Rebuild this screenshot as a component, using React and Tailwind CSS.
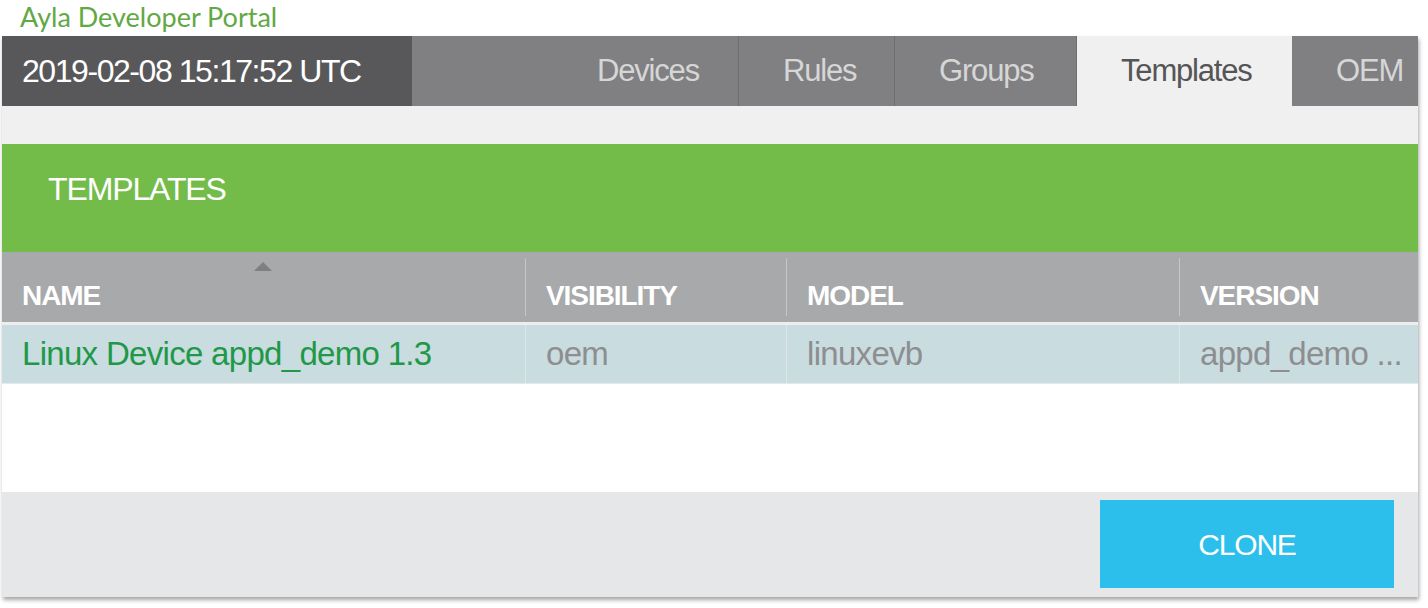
const tabs = [
  { label: 'Rules', w: 'w-[156px]' },
  { label: 'Groups', w: 'w-[182px]' },
  { label: 'Templates', w: 'w-[216px]', active: true },
  { label: 'OEM', w: 'w-[126px]' },
];

const columns = [
  { label: 'NAME', w: 'w-[523px]', sort: true },
  { label: 'VISIBILITY', w: 'w-[261px]' },
  { label: 'MODEL', w: 'w-[393px]' },
  { label: 'VERSION', w: 'flex-1' },
];

export default function App() {
  return (
    <div className="w-[1428px] h-[608px] bg-white overflow-hidden font-['Liberation_Sans',Arial,sans-serif]">
      <div className="h-[36px] pl-[20px] text-[27px] leading-[34px] text-[#62a844] font-['Lato','Open_Sans',sans-serif]">
        Ayla Developer Portal
      </div>

      <div className="ml-[2px] w-[1416px] shadow-[1px_3px_4px_rgba(0,0,0,0.35)]">
        {/* top nav */}
        <div className="flex h-[70px] overflow-hidden">
          <div className="w-[410px] bg-[#58585a] text-white text-[32px] tracking-[-0.045em] flex items-center pl-[20px]">
            2019-02-08 15:17:52 UTC
          </div>
          <div className="flex-1 bg-[#808082] text-[#d6d6d6] text-[31px] tracking-[-0.038em] flex items-center justify-end pr-[39px]">
            Devices
          </div>
          {tabs.map(t => (
            <div key={t.label}
              className={`${t.w} shrink-0 flex items-center pl-[44px] text-[31px] tracking-[-0.038em] border-l border-[#6e6e70] ${t.active ? 'bg-[#f0f0f0] text-[#555557]' : 'bg-[#808082] text-[#d6d6d6]'} ${t.label === 'OEM' ? 'border-l-0' : ''}`}>
              {t.label}
            </div>
          ))}
        </div>

        <div className="h-[38px] bg-[#f0f0f0]" />

        <div className="h-[108px] bg-[#74bc4a] pl-[46px] pt-[29px]">
          <h1 className="text-white text-[32px] tracking-[-0.035em] leading-[32px]">TEMPLATES</h1>
        </div>

        {/* table header */}
        <div className="flex h-[70px] bg-[#a8a9ab]">
          {columns.map((c, i) => (
            <div key={c.label}
              className={`${c.w} relative flex items-end pb-[14px] pl-[20px] text-white font-bold text-[28px] tracking-[-0.038em] ${i > 0 ? 'border-l border-[#c6c7c9]' : ''} my-[6px]`}>
              {c.sort && (
                <span className="absolute left-[252px] top-[4px] w-0 h-0 border-l-[9px] border-r-[9px] border-b-[9px] border-l-transparent border-r-transparent border-b-[#7f7f81]" />
              )}
              <span className="leading-[28px] translate-y-[8px]">{c.label}</span>
            </div>
          ))}
        </div>

        <div className="h-[3px] bg-[#eeeeee]" />

        {/* row */}
        <div className="flex h-[59px] bg-[#c9dce0] text-[33px] tracking-[-0.021em] border-b border-[#e4eaec]">
          <div className="w-[523px] flex items-center pl-[20px] text-[#1f9848]">Linux Device appd_demo 1.3</div>
          <div className="w-[261px] flex items-center pl-[20px] text-[#8e8e90] border-l border-[#dde6e8]">oem</div>
          <div className="w-[393px] flex items-center pl-[20px] text-[#8e8e90] border-l border-[#dde6e8]">linuxevb</div>
          <div className="flex-1 flex items-center pl-[20px] text-[#8e8e90] border-l border-[#dde6e8] whitespace-nowrap overflow-hidden">appd_demo ...</div>
        </div>

        <div className="h-[108px] bg-white" />

        {/* footer */}
        <div className="h-[105px] bg-[#e6e7e8] flex justify-end pt-[8px] pr-[24px]">
          <button className="w-[294px] h-[88px] bg-[#2dbfec] text-white text-[30px] tracking-[-0.04em] flex items-center justify-center">
            CLONE
          </button>
        </div>
      </div>
    </div>
  );
}
